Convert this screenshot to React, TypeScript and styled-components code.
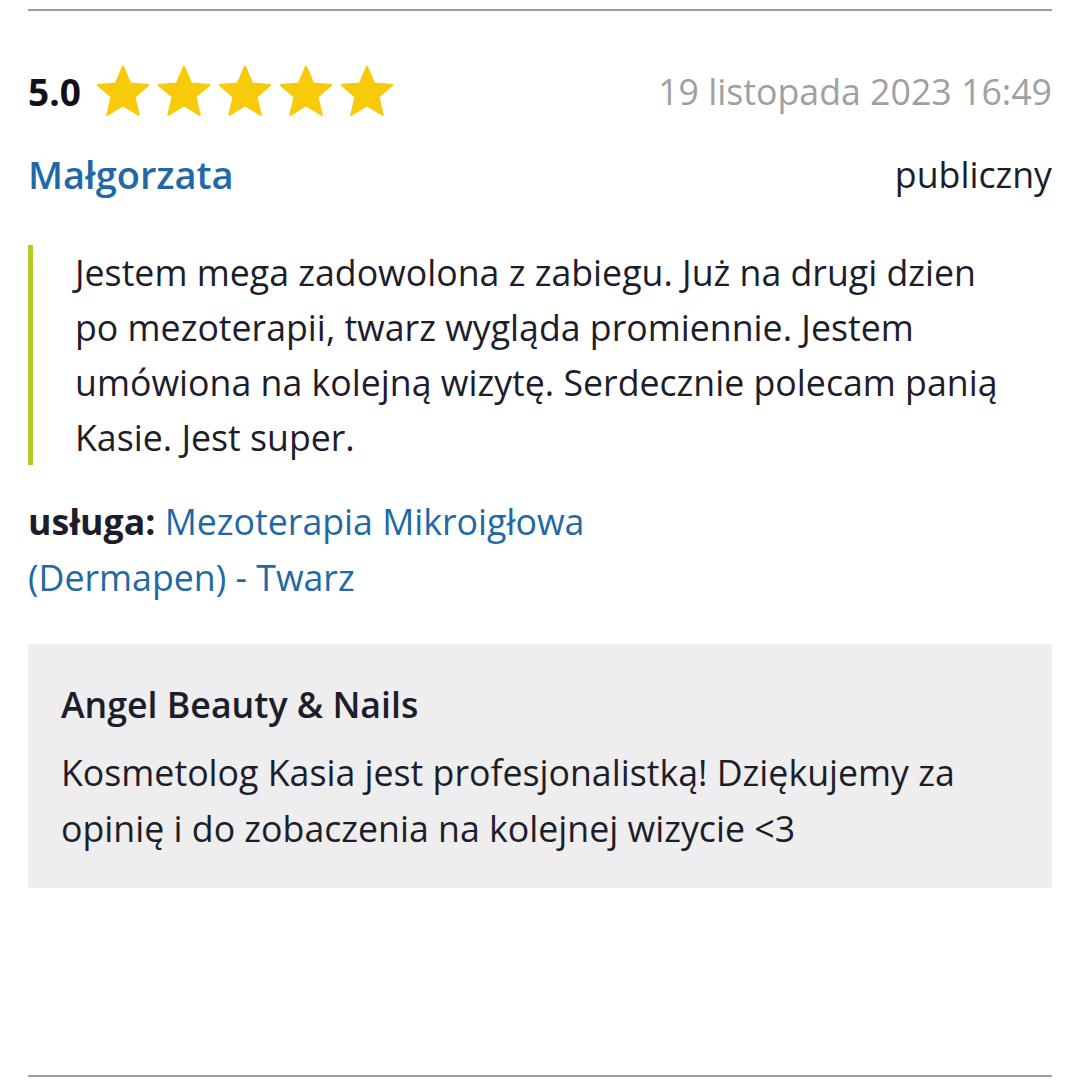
import * as React from "react";
import styled, { createGlobalStyle } from "styled-components";

const GlobalStyle = createGlobalStyle`
  html, body {
    margin: 0;
    padding: 0;
    background: #ffffff;
  }
  body {
    font-family: "Open Sans", "Noto Sans", sans-serif;
    color: #1d1d2b;
  }
`;

const Page = styled.div`
  padding: 9px 28px 0;
  width: 1080px;
  box-sizing: border-box;
`;

const Review = styled.article`
  border-top: 2px solid #9c9c9c;
  border-bottom: 2px solid #9c9c9c;
  height: 1068px;
  box-sizing: border-box;
  display: flex;
  flex-direction: column;
`;

const HeadRow = styled.div<{ $top: number }>`
  display: flex;
  align-items: center;
  justify-content: space-between;
  margin-top: ${(p) => p.$top}px;
  height: 56px;
`;

const Rating = styled.div`
  display: flex;
  align-items: center;
  gap: 16px;
`;

const Score = styled.span`
  font-size: 37px;
  font-weight: 700;
  color: #111118;
`;

const Stars = styled.div`
  display: flex;
  gap: 9px;
`;

const DateText = styled.span`
  font-size: 35.7px;
  color: #a0a0a0;
`;

const Author = styled.span`
  font-size: 38px;
  font-weight: 600;
  color: #1f69a6;
`;

const Visibility = styled.span`
  font-size: 35.7px;
  color: #1d1d2b;
`;

const Quote = styled.blockquote`
  margin: 43px 0 0;
  padding: 0 42px;
  border-left: 5px solid #b6c82a;
  font-size: 35.7px;
  line-height: 55px;
  color: #1d1d2b;
`;

const Service = styled.p`
  margin: 28px 0 0;
  width: 600px;
  font-size: 35.7px;
  line-height: 56px;
`;

const Label = styled.b`
  font-weight: 700;
  color: #1d1d2b;
`;

const Link = styled.a`
  color: #1f69a6;
  text-decoration: none;
`;

const ReplyBox = styled.section`
  margin-top: 39px;
  background: #eeeeee;
  padding: 35px 33px 32px;
`;

const ReplyTitle = styled.h3`
  margin: 0 0 15px;
  font-size: 35.7px;
  font-weight: 600;
  line-height: 50px;
  color: #1d1d2b;
`;

const ReplyText = styled.p`
  margin: 0;
  font-size: 35.7px;
  line-height: 56px;
  color: #1d1d2b;
`;

const Star = () => (
  <svg width="52" height="50" viewBox="2 2 20 19.3" aria-hidden="true">
    <path
      d="M12 17.27L18.18 21l-1.64-7.03L22 9.24l-7.19-.61L12 2 9.19 8.63 2 9.24l5.46 4.73L5.82 21z"
      fill="#f7ca0a"
      stroke="#f7ca0a"
      strokeWidth="0.6"
      strokeLinejoin="round"
    />
  </svg>
);

export default function App() {
  return (
    <Page>
      <GlobalStyle />
      <Review>
        <HeadRow $top={52}>
          <Rating>
            <Score>5.0</Score>
            <Stars>
              {[0, 1, 2, 3, 4].map((i) => (
                <Star key={i} />
              ))}
            </Stars>
          </Rating>
          <DateText>19 listopada 2023 16:49</DateText>
        </HeadRow>
        <HeadRow $top={27}>
          <Author>Małgorzata</Author>
          <Visibility>publiczny</Visibility>
        </HeadRow>
        <Quote>
          Jestem mega zadowolona z zabiegu. Już na drugi dzien po mezoterapii,
          twarz wygląda promiennie. Jestem umówiona na kolejną wizytę.
          Serdecznie polecam panią Kasie. Jest super.
        </Quote>
        <Service>
          <Label>usługa:</Label>{" "}
          <Link href="#">Mezoterapia Mikroigłowa (Dermapen) - Twarz</Link>
        </Service>
        <ReplyBox>
          <ReplyTitle>Angel Beauty &amp; Nails</ReplyTitle>
          <ReplyText>
            Kosmetolog Kasia jest profesjonalistką! Dziękujemy za opinię i do
            zobaczenia na kolejnej wizycie &lt;3
          </ReplyText>
        </ReplyBox>
      </Review>
    </Page>
  );
}
